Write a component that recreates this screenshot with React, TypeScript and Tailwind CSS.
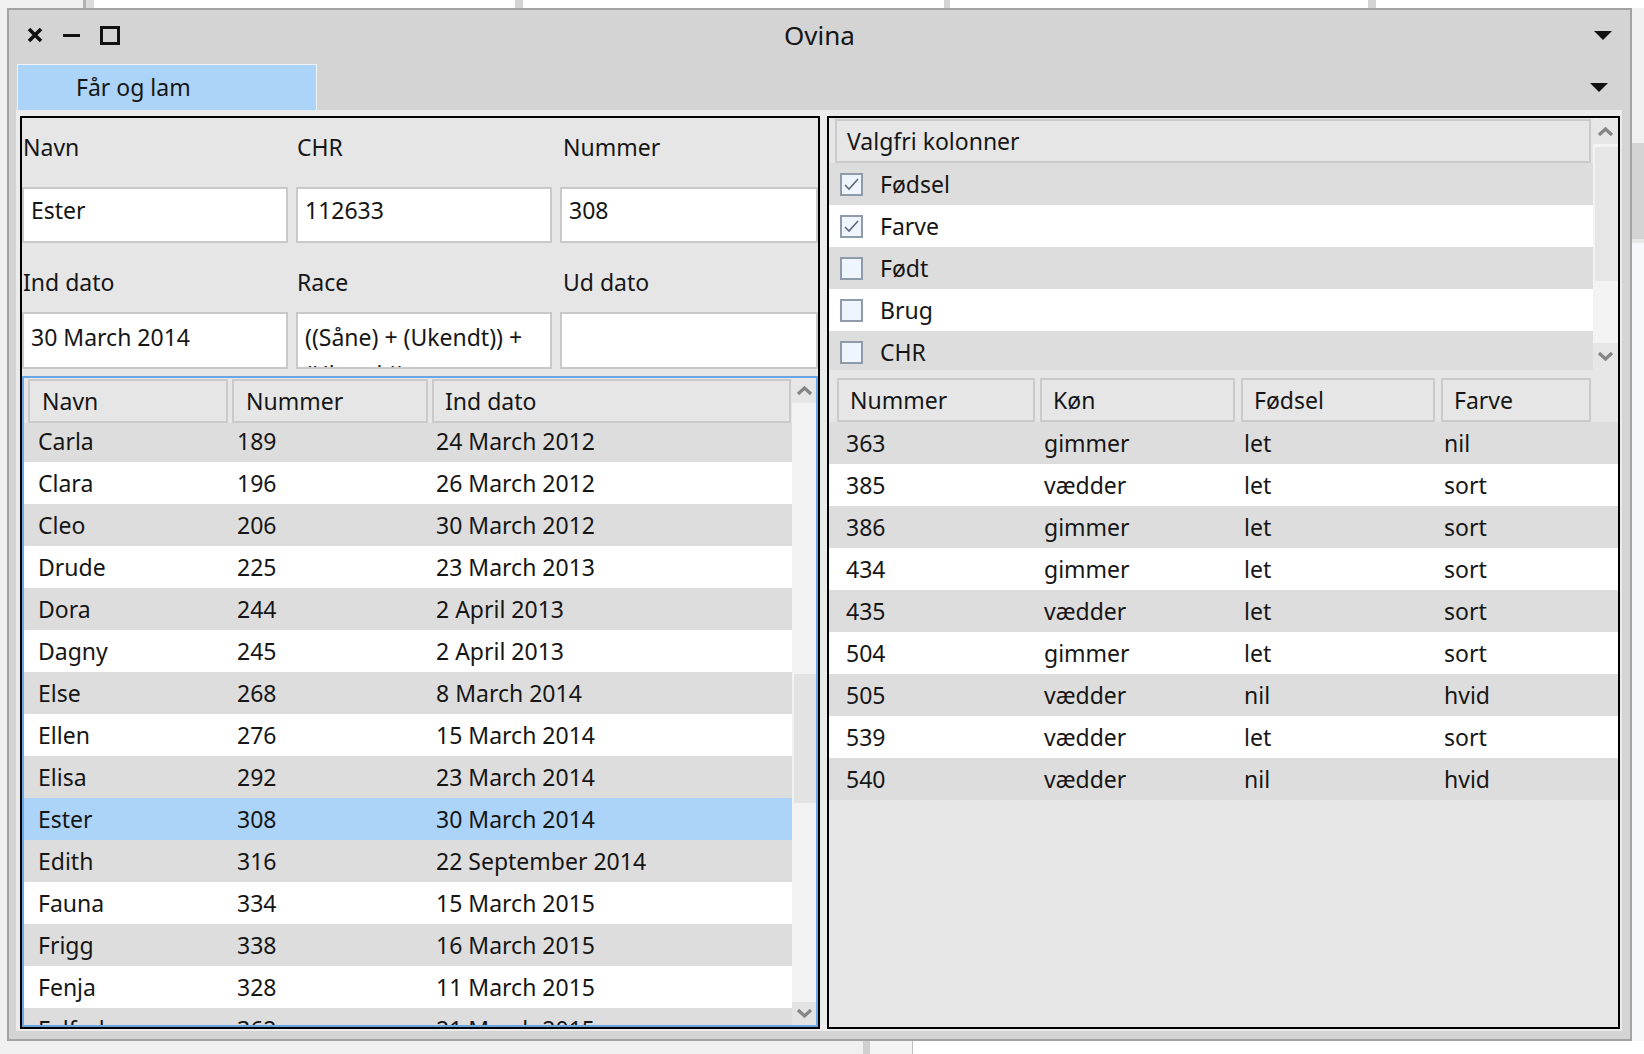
import React from 'react';

type Sheep = { navn: string; nummer: number; dato: string };
type Lamb = { nummer: number; koen: string; foedsel: string; farve: string };

const sheep: Sheep[] = [
  { navn: 'Carla', nummer: 189, dato: '24 March 2012' },
  { navn: 'Clara', nummer: 196, dato: '26 March 2012' },
  { navn: 'Cleo', nummer: 206, dato: '30 March 2012' },
  { navn: 'Drude', nummer: 225, dato: '23 March 2013' },
  { navn: 'Dora', nummer: 244, dato: '2 April 2013' },
  { navn: 'Dagny', nummer: 245, dato: '2 April 2013' },
  { navn: 'Else', nummer: 268, dato: '8 March 2014' },
  { navn: 'Ellen', nummer: 276, dato: '15 March 2014' },
  { navn: 'Elisa', nummer: 292, dato: '23 March 2014' },
  { navn: 'Ester', nummer: 308, dato: '30 March 2014' },
  { navn: 'Edith', nummer: 316, dato: '22 September 2014' },
  { navn: 'Fauna', nummer: 334, dato: '15 March 2015' },
  { navn: 'Frigg', nummer: 338, dato: '16 March 2015' },
  { navn: 'Fenja', nummer: 328, dato: '11 March 2015' },
  { navn: 'Falfod', nummer: 362, dato: '21 March 2015' },
  { navn: 'Gerda', nummer: 371, dato: '2 April 2016' },
];

const lambs: Lamb[] = [
  { nummer: 363, koen: 'gimmer', foedsel: 'let', farve: 'nil' },
  { nummer: 385, koen: 'vædder', foedsel: 'let', farve: 'sort' },
  { nummer: 386, koen: 'gimmer', foedsel: 'let', farve: 'sort' },
  { nummer: 434, koen: 'gimmer', foedsel: 'let', farve: 'sort' },
  { nummer: 435, koen: 'vædder', foedsel: 'let', farve: 'sort' },
  { nummer: 504, koen: 'gimmer', foedsel: 'let', farve: 'sort' },
  { nummer: 505, koen: 'vædder', foedsel: 'nil', farve: 'hvid' },
  { nummer: 539, koen: 'vædder', foedsel: 'let', farve: 'sort' },
  { nummer: 540, koen: 'vædder', foedsel: 'nil', farve: 'hvid' },
];

const columns = [
  { label: 'Fødsel', checked: true },
  { label: 'Farve', checked: true },
  { label: 'Født', checked: false },
  { label: 'Brug', checked: false },
  { label: 'CHR', checked: false },
];

const Triangle = () => (
  <svg width="18" height="9" viewBox="0 0 18 9">
    <polygon points="0,0 18,0 9,9" fill="#111" />
  </svg>
);

const Chevron = ({ up }: { up?: boolean }) => (
  <svg width="17" height="11" viewBox="0 0 17 11">
    <polyline
      points={up ? '2,9 8.5,3 15,9' : '2,2 8.5,8 15,2'}
      fill="none"
      stroke="#858585"
      strokeWidth="3.2"
    />
  </svg>
);

const Checkbox = ({ checked }: { checked: boolean }) => (
  <div className="w-[23px] h-[23px] border-2 border-[#8f9aab] bg-[#eef5fd] flex items-center justify-center">
    {checked && (
      <svg width="17" height="15" viewBox="0 0 17 15">
        <polyline points="2,8 6,12 15,2" fill="none" stroke="#5c677a" strokeWidth="1.6" />
      </svg>
    )}
  </div>
);

const HeaderCell = ({ label, className }: { label: string; className: string }) => (
  <div className={`h-[44px] border-2 border-[#cacaca] bg-[#e6e6e6] flex items-center pl-[11px] ${className}`}>
    {label}
  </div>
);

const Field = ({ value, className }: { value: string; className: string }) => (
  <div className={`border-2 border-[#c9c9c9] bg-white pl-[7px] overflow-hidden ${className}`}>
    {value}
  </div>
);

const SheepPanel = () => (
  <div className="w-[800px] min-h-0 border-2 border-black bg-[#e6e6e6] flex flex-col overflow-hidden">
    {/* formular */}
    <div className="flex flex-col h-[258px] shrink-0">
      <div className="flex h-[69px] pt-[14px] leading-[30px] pl-[1px]">
        <div className="w-[274px]">Navn</div>
        <div className="w-[264px]">CHR</div>
        <div className="flex-1 pl-[2px]">Nummer</div>
      </div>
      <div className="flex h-[56px] gap-[8px]">
        <Field value="Ester" className="w-[266px] pt-[6px] leading-[30px]" />
        <Field value="112633" className="w-[256px] pt-[6px] leading-[30px]" />
        <Field value="308" className="flex-1 pt-[6px] leading-[30px]" />
      </div>
      <div className="flex h-[69px] pt-[24px] leading-[30px] pl-[1px]">
        <div className="w-[274px]">Ind dato</div>
        <div className="w-[264px]">Race</div>
        <div className="flex-1 pl-[2px]">Ud dato</div>
      </div>
      <div className="flex h-[57px] gap-[8px]">
        <Field value="30 March 2014" className="w-[266px] pt-[8px] leading-[30px]" />
        <Field value="((Såne) + (Ukendt)) + (Ukendt))" className="w-[256px] pt-[5px] leading-[37px]" />
        <Field value="" className="flex-1" />
      </div>
    </div>

    {/* liste */}
    <div className="flex-1 min-h-0 border-2 border-[#67a5e3] flex overflow-hidden">
      <div className="flex-1 min-h-0 flex flex-col overflow-hidden">
        <div className="flex pt-[1px] pl-[4px] gap-[4px] shrink-0">
          <HeaderCell label="Navn" className="w-[200px] pl-[12px]" />
          <HeaderCell label="Nummer" className="w-[196px] pl-[12px]" />
          <HeaderCell label="Ind dato" className="w-[359px] pl-[10px]" />
        </div>
        <div className="flex-1 min-h-0 overflow-hidden">
          <div className="-mt-[3px]">
            {sheep.map((s, i) => (
              <div
                key={s.nummer}
                className={`flex h-[42px] items-center ${
                  s.navn === 'Ester' ? 'bg-[#acd3f8]' : i % 2 === 0 ? 'bg-[#dddddd]' : 'bg-white'
                }`}
              >
                <div className="w-[213px] pl-[14px]">{s.navn}</div>
                <div className="w-[199px]">{s.nummer}</div>
                <div className="flex-1">{s.dato}</div>
              </div>
            ))}
          </div>
        </div>
      </div>
      <div className="w-[24px] min-h-0 flex flex-col bg-[#f3f3f3]">
        <div className="h-[25px] shrink-0 bg-[#e6e6e6] flex items-center justify-center pl-[1px]">
          <Chevron up />
        </div>
        <div className="flex-1 min-h-0">
          <div className="h-[271px]" />
          <div className="h-[129px] ml-[2px] bg-[#e3e3e3]" />
        </div>
        <div className="h-[23px] shrink-0 bg-[#e3e3e3] flex items-center justify-center">
          <Chevron />
        </div>
      </div>
    </div>
  </div>
);

const LambPanel = () => (
  <div className="flex-1 min-h-0 border-2 border-black bg-[#e6e6e6] flex flex-col overflow-hidden">
    {/* valgfri kolonner */}
    <div className="flex h-[252px] shrink-0 overflow-hidden">
      <div className="flex-1 flex flex-col overflow-hidden">
        <div className="pt-[1px] pl-[6px] pr-[2px] shrink-0">
          <div className="h-[44px] border-2 border-[#cacaca] bg-[#e6e6e6] flex items-center pl-[10px]">
            Valgfri kolonner
          </div>
        </div>
        {columns.map((c, i) => (
          <div
            key={c.label}
            className={`flex h-[42px] shrink-0 items-center pl-[11px] gap-[17px] ${
              i % 2 === 0 ? 'bg-[#dddddd]' : 'bg-white'
            }`}
          >
            <Checkbox checked={c.checked} />
            <span>{c.label}</span>
          </div>
        ))}
      </div>
      <div className="w-[25px] flex flex-col bg-[#f3f3f3]">
        <div className="h-[25px] mt-[1px] bg-[#e6e6e6] flex items-center justify-center">
          <Chevron up />
        </div>
        <div className="flex-1 pt-[3px]">
          <div className="h-[134px] ml-[2px] bg-[#e6e6e6]" />
        </div>
        <div className="h-[27px] bg-[#e6e6e6] flex items-center justify-center">
          <Chevron />
        </div>
      </div>
    </div>

    {/* lam */}
    <div className="flex mt-[8px] pl-[8px] shrink-0">
      <HeaderCell label="Nummer" className="w-[198px] pl-[10px]" />
      <HeaderCell label="Køn" className="w-[195px] ml-[5px]" />
      <HeaderCell label="Fødsel" className="w-[194px] ml-[6px]" />
      <HeaderCell label="Farve" className="w-[150px] ml-[6px] pl-[9px]" />
    </div>
    <div className="flex flex-col shrink-0">
      {lambs.map((l, i) => (
        <div
          key={l.nummer}
          className={`flex h-[42px] items-center pt-[1px] ${i % 2 === 0 ? 'bg-[#dddddd]' : 'bg-white'}`}
        >
          <div className="w-[215px] pl-[17px]">{l.nummer}</div>
          <div className="w-[200px]">{l.koen}</div>
          <div className="w-[200px]">{l.foedsel}</div>
          <div className="flex-1">{l.farve}</div>
        </div>
      ))}
    </div>
  </div>
);

const Window = () => (
  <div className="w-[1625px] h-[1033px] border-2 border-[#a3a3a3] bg-[#d4d4d4] flex flex-col overflow-hidden">
    {/* titellinje */}
    <div className="h-[50px] flex items-center shrink-0">
      <div className="w-[220px] flex items-center pl-[18px]">
        <svg width="16" height="16" viewBox="0 0 16 16">
          <path d="M2 2 L14 14 M14 2 L2 14" stroke="#111" strokeWidth="3.6" />
        </svg>
        <div className="ml-[20px] w-[17px] h-[3px] bg-[#111]" />
        <div className="ml-[20px] w-[20px] h-[19px] border-[3px] border-[#111]" />
      </div>
      <div className="flex-1 text-center text-[26px] leading-[30px]">Ovina</div>
      <div className="w-[220px] flex justify-end pr-[18px]">
        <Triangle />
      </div>
    </div>

    {/* faneblad */}
    <div className="h-[50px] flex shrink-0">
      <div className="ml-[8px] mt-[4px] w-[300px] h-[46px] bg-[#acd3f8] border-t border-x border-[#eef2f6] flex items-center pl-[58px]">
        Får og lam
      </div>
      <div className="flex-1 flex justify-end items-center pt-[4px] pr-[22px]">
        <Triangle />
      </div>
    </div>

    {/* indhold */}
    <div className="ml-[7px] mr-[8px] mb-[8px] flex-1 min-h-0 bg-[#ebebeb] pt-[6px] pl-[4px] pr-[2px] pb-[2px] flex gap-[7px]">
      <SheepPanel />
      <LambPanel />
    </div>
  </div>
);

export default function App() {
  return (
    <div className="w-[1644px] h-[1054px] overflow-hidden bg-[#f0f0f0] flex flex-col font-['Noto_Sans',sans-serif] text-[23px] text-[#161616]">
      <div className="h-[8px] flex shrink-0">
        <div className="w-[83px] bg-[#f0f0f0]" />
        <div className="w-[3px] bg-[#b0b0b0]" />
        <div className="w-[8px] bg-[#dcdcdc]" />
        <div className="w-[421px] bg-white" />
        <div className="w-[8px] bg-[#d4d4d4]" />
        <div className="w-[421px] bg-white" />
        <div className="w-[6px] bg-[#d4d4d4]" />
        <div className="w-[418px] bg-white" />
        <div className="w-[8px] bg-[#d4d4d4]" />
        <div className="flex-1 bg-white" />
      </div>
      <div className="h-[1033px] flex shrink-0">
        <div className="w-[7px] bg-[#f0f0f0]" />
        <Window />
        <div className="flex-1 flex flex-col">
          <div className="h-[135px] bg-[#f0f0f0]" />
          <div className="h-[96px] bg-[#d4d4d4]" />
          <div className="h-[4px] bg-[#e8e8e8]" />
          <div className="flex-1 bg-[#f7f8fb]" />
        </div>
      </div>
      <div className="flex-1 flex">
        <div className="w-[863px] bg-[#f0f0f0]" />
        <div className="w-[7px] bg-[#d0d0d0]" />
        <div className="w-[42px] bg-[#f4f4f4]" />
        <div className="w-[1px] bg-[#c0c0c0]" />
        <div className="flex-1 bg-white" />
      </div>
    </div>
  );
}
